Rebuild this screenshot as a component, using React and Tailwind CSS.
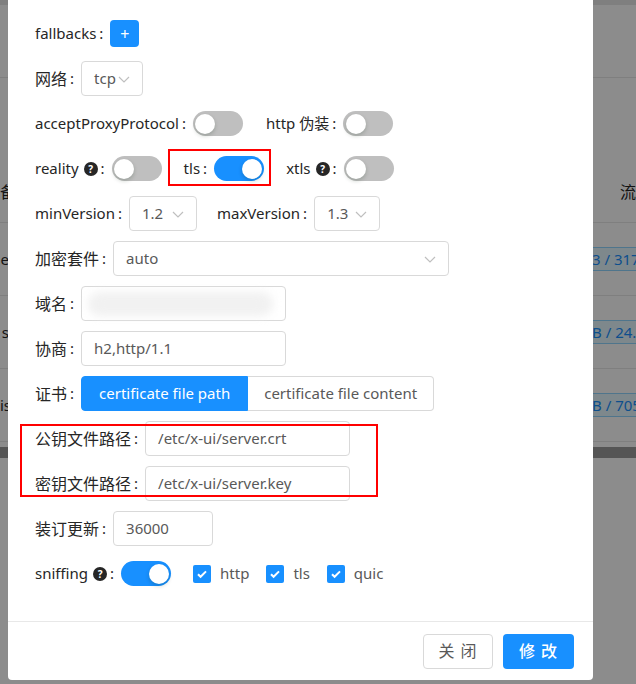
import React from "react";

const FONT = { fontFamily: '"Noto Sans", "Noto Sans CJK SC", sans-serif' };

function Help() {
  return (
    <span className="inline-flex items-center justify-center w-[14px] h-[14px] rounded-full bg-[#262626] text-white text-[10px] font-bold leading-none ml-[5px]">
      ?
    </span>
  );
}

function Label({ text, help, cjk }) {
  return (
    <span className="flex items-center text-[#262626] shrink-0">
      <span className={cjk ? "text-[16px]" : ""}>{text}</span>
      {help && <Help />}
      <span className="ml-[3px] mr-[7px]">:</span>
    </span>
  );
}

function Switch({ on }) {
  return (
    <span
      className={`relative inline-block w-[50px] h-[25px] rounded-full shrink-0 ${
        on ? "bg-[#1890ff]" : "bg-[#bfbfbf]"
      }`}
    >
      <span
        className={`absolute top-[2.5px] w-[20px] h-[20px] rounded-full bg-white shadow-[0_2px_4px_rgba(0,35,11,0.2)] ${
          on ? "right-[2.5px]" : "left-[2.5px]"
        }`}
      />
    </span>
  );
}

function Chevron() {
  return (
    <svg width="12" height="12" viewBox="0 0 12 12" fill="none" stroke="#bfbfbf" strokeWidth="1.2">
      <path d="M1 4l5 5 5-5" />
    </svg>
  );
}

function Select({ value, w }) {
  return (
    <div
      className={`flex items-center h-[35px] border border-[#d9d9d9] rounded-[4px] pl-[12px] pr-[12px] text-[#595959] shrink-0 ${w}`}
    >
      <span>{value}</span>
      <span className="ml-auto flex">
        <Chevron />
      </span>
    </div>
  );
}

function Input({ value, w }) {
  return (
    <div
      className={`flex items-center h-[35px] border border-[#d9d9d9] rounded-[4px] px-[12px] text-[#595959] shrink-0 ${w}`}
    >
      {value}
    </div>
  );
}

function Check({ label }) {
  return (
    <span className="flex items-center">
      <span className="flex items-center justify-center w-[18px] h-[18px] rounded-[2px] bg-[#1890ff]">
        <svg width="12" height="12" viewBox="0 0 12 12" fill="none" stroke="#fff" strokeWidth="2">
          <path d="M2 6.2l2.6 2.6L10 3.4" />
        </svg>
      </span>
      <span className="ml-[9px] text-[#595959]">{label}</span>
    </span>
  );
}

function Row({ children }) {
  return <div className="flex items-center h-[45px]">{children}</div>;
}

function BgTag({ text }) {
  return (
    <span className="inline-block border border-[#91d5ff] bg-[#e6f7ff] text-[#1890ff] px-[4px] leading-[22px] text-[15px] rounded-[2px] whitespace-nowrap">
      {text}
    </span>
  );
}

function BgRow({ left, right }) {
  return (
    <div className="flex items-center h-[73px] border-b border-[#e8e8e8] text-[15px]">
      <div className="w-[593px] shrink-0 overflow-hidden text-[#262626]">
        <span className="block w-[9px] overflow-hidden whitespace-nowrap text-right">{left}</span>
      </div>
      <div className="-ml-[6px] whitespace-nowrap">{right}</div>
    </div>
  );
}

export default function App() {
  return (
    <div className="relative w-full h-[684px] overflow-hidden bg-white" style={FONT}>
      {/* page behind the modal */}
      <div className="bg-white">
        <div className="h-[5px] bg-[#e8e8e8]" />
        <div className="h-[73px] border-b border-[#e8e8e8]" />
        <div className="h-[145px] border-b border-[#e8e8e8] flex items-end pb-[18px] text-[16px] text-[#262626]">
          <div className="w-[593px] shrink-0 overflow-hidden">
            <span className="block w-[9px] text-right overflow-hidden whitespace-nowrap">备</span>
          </div>
          <div className="pl-[27px] whitespace-nowrap">流量</div>
        </div>
        <BgRow left="e" right={<BgTag text="3 / 317.5 GB" />} />
        <BgRow left="s" right={<BgTag text="B / 24.5 GB" />} />
        <BgRow left="is" right={<BgTag text="B / 705 GB" />} />
        <div className="h-[5px]" />
        <div className="h-[11px] bg-[#9b9b9b]" />
      </div>

      {/* overlay */}
      <div className="absolute inset-0 bg-black/45 flex items-start pl-[8px]">
        <div className="relative w-[585px] h-[680px] bg-white rounded-b-[4px] flex flex-col text-[15px]">
          <div className="flex-1 pt-[11px] pl-[27px]">
            <Row>
              <Label text="fallbacks" />
              <span className="flex items-center justify-center w-[29px] h-[27px] rounded-[4px] bg-[#1890ff] text-white text-[16px] leading-none">
                +
              </span>
            </Row>
            <Row>
              <Label text="网络" cjk />
              <Select value="tcp" w="w-[62px]" />
            </Row>
            <Row>
              <Label text="acceptProxyProtocol" />
              <Switch on={false} />
              <span className="ml-[23px] flex items-center">
                <Label text="http 伪装" />
                <Switch on={false} />
              </span>
            </Row>
            <Row>
              <Label text="reality" help />
              <Switch on={false} />
              <span className="ml-[22px] flex items-center">
                <Label text="tls" />
                <Switch on />
              </span>
              <span className="ml-[22px] flex items-center">
                <Label text="xtls" help />
                <Switch on={false} />
              </span>
            </Row>
            <Row>
              <Label text="minVersion" />
              <Select value="1.2" w="w-[68px]" />
              <span className="ml-[20px] flex items-center">
                <Label text="maxVersion" />
                <Select value="1.3" w="w-[66px]" />
              </span>
            </Row>
            <Row>
              <Label text="加密套件" cjk />
              <Select value="auto" w="w-[336px]" />
            </Row>
            <Row>
              <Label text="域名" cjk />
              <div className="flex items-center h-[35px] w-[205px] border border-[#d9d9d9] rounded-[4px] px-[6px] shrink-0">
                <div className="h-[24px] w-[185px] rounded-full bg-[#f1f1f1] blur-[4px]" />
              </div>
            </Row>
            <Row>
              <Label text="协商" cjk />
              <Input value="h2,http/1.1" w="w-[205px]" />
            </Row>
            <Row>
              <Label text="证书" cjk />
              <div className="flex h-[35px]">
                <span className="flex items-center px-[17px] bg-[#1890ff] text-white rounded-l-[4px] border border-[#1890ff]">
                  certificate file path
                </span>
                <span className="flex items-center px-[16px] text-[#595959] border border-l-0 border-[#d9d9d9] rounded-r-[4px]">
                  certificate file content
                </span>
              </div>
            </Row>
            <Row>
              <Label text="公钥文件路径" cjk />
              <Input value="/etc/x-ui/server.crt" w="w-[205px]" />
            </Row>
            <Row>
              <Label text="密钥文件路径" cjk />
              <Input value="/etc/x-ui/server.key" w="w-[205px]" />
            </Row>
            <Row>
              <Label text="装订更新" cjk />
              <Input value="36000" w="w-[100px]" />
            </Row>
            <Row>
              <Label text="sniffing" help />
              <Switch on />
              <span className="ml-[22px] flex items-center gap-[17px]">
                <Check label="http" />
                <Check label="tls" />
                <Check label="quic" />
              </span>
            </Row>
          </div>

          <div className="h-[59px] border-t border-[#e8e8e8] flex items-center justify-end pr-[19px] gap-[10px]">
            <button className="w-[70px] h-[35px] rounded-[4px] border border-[#d9d9d9] bg-white text-[#595959] text-[16px] tracking-[1px]">
              关 闭
            </button>
            <button className="w-[71px] h-[35px] rounded-[4px] bg-[#1890ff] text-white text-[16px] font-medium tracking-[1px]">
              修 改
            </button>
          </div>

          {/* annotation boxes */}
          <div className="absolute left-[160px] top-[149px] w-[103px] h-[37px] border-2 border-[#ff0000]" />
          <div className="absolute left-[12px] top-[424px] w-[358px] h-[73px] border-2 border-[#ff0000]" />
        </div>
      </div>
    </div>
  );
}
